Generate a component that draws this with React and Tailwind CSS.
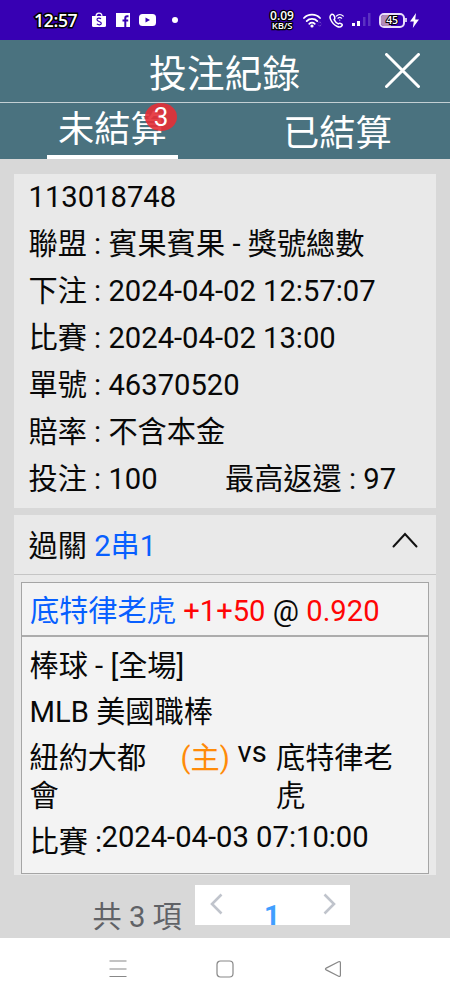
import React from 'react';

const summary = [
  '113018748',
  '聯盟 : 賓果賓果 - 獎號總數',
  '下注 : 2024-04-02 12:57:07',
  '比賽 : 2024-04-02 13:00',
  '單號 : 46370520',
  '賠率 : 不含本金',
];

function StatusBar() {
  return (
    <header className="flex h-10 items-center bg-[#3700b3] pl-[34px] text-white">
      <span className="w-[46px] text-[17.500px] leading-10 font-semibold whitespace-nowrap font-['Open_Sans','Noto_Sans',sans-serif] tracking-[-0.300px] [-webkit-text-stroke:3px_#000] [paint-order:stroke_fill]">12:57</span>
      <svg className="ml-[11px] h-4 w-4" viewBox="0 0 16 16">
        <path d="M1 4h14v9.5a1.500 1.500 0 0 1-1.500 1.500h-11a1.500 1.500 0 0 1-1.500-1.500z" fill="#fff" />
        <path d="M5 4.500C5 0 11 0 11 4.500" fill="none" stroke="#fff" strokeWidth="1.200" />
        <path d="M10 6.800C8.600 5.600 6 6 6 7.700c0 2 4.300 1.500 4.300 3.600 0 1.900-2.900 2-4.500.6" fill="none" stroke="#3700b3" strokeWidth="1.200" />
      </svg>
      <svg className="ml-[9px] h-[14px] w-[14px]" viewBox="0 0 14 14">
        <path d="M0 0h14v14H0z" fill="#fff" />
        <path d="M12.500 3.200H11q-1.700 0-1.700 1.800v9M6.500 7.500h5.700" fill="none" stroke="#3700b3" strokeWidth="2" />
      </svg>
      <svg className="ml-[9px] h-3 w-[17px]" viewBox="0 0 17 12">
        <rect width="17" height="12" rx="3.500" fill="#fff" />
        <path d="M6.500 3.500v5l4.500-2.500z" fill="#3700b3" />
      </svg>
      <span className="ml-4 h-1.5 w-1.5 rounded-full bg-white" />
      <div className="ml-[91px] flex w-[26px] flex-col items-center font-['Open_Sans',sans-serif] font-semibold [-webkit-text-stroke:2.5px_#000] [paint-order:stroke_fill]">
        <span className="text-[12px] leading-[10px]">0.09</span>
        <span className="text-[9.500px] leading-[9px] tracking-[-0.200px]">KB/S</span>
      </div>
      <svg className="ml-2 h-[15px] w-[19px]" viewBox="0 0 19 15" fill="none" stroke="#fff" strokeWidth="1.800" strokeLinecap="round">
        <path d="M1 5c4-4.400 12-4.400 16 0M3.700 8.100c2.600-2.900 8-2.900 10.600 0M6.300 10.800c1.500-1.600 3.900-1.600 5.400 0" />
        <circle cx="9" cy="13" r=".7" fill="#fff" />
        <path d="m15.500 10 1.200-1.200L18 10m-2.500 2 1.200 1.200L18 12" stroke="#7850cc" strokeWidth=".8" />
      </svg>
      <svg className="ml-[7px] h-[15px] w-[15px]" viewBox="0 0 15 15" fill="none" stroke="#fff" strokeWidth="1.500" strokeLinecap="round" strokeLinejoin="round">
        <path d="M2.300 1.500C.8 2.700.7 4.300 1.500 6.200c1.300 3.100 3.600 5.800 6.800 7.300 1.900.9 3.500.7 4.600-.8.600-.8.300-1.500-.4-1.900-1.100-.7-2.300-1-3.200.1-1.700-.8-3.300-2.500-4.200-4.300 1.200-1 .7-2.500.1-3.700-.5-1-1.400-2.100-2.900-1.400z" />
        <path d="M7.300 3.200c2-2 5-2 7 0M9 5.200c1.200-1 2.400-1 3.600 0M10.800 7v.1" strokeWidth="1.200" />
      </svg>
      <svg className="ml-2 h-4 w-[19px]" viewBox="0 0 19 16">
        <path d="M0 11h3v3H0zM5 9h3v5H5z" fill="#fff" />
        <path d="M11 5h2.500v9H11zM16 1h2.500v13H16z" fill="#5b31c2" />
      </svg>
      <div className="relative ml-[8px] flex h-[15px] w-[26px] items-center justify-center overflow-hidden rounded-[5px] border-2 border-[#e9defa]">
        <span className="absolute inset-y-0 left-0 w-[10px] bg-[#b38db8]" />
        <span className="relative font-['Open_Sans',sans-serif] text-[10.500px] leading-[11px] font-semibold tracking-[-0.300px] [-webkit-text-stroke:2px_#000] [paint-order:stroke_fill]">45</span>
      </div>
      <span className="h-1 w-0.5 bg-[#cdbdf0]" />
      <svg className="ml-[3px] h-[15px] w-[9px]" viewBox="0 0 9 15"><path d="M6 0 0 8.500h3.800L2.800 15 9 6.500H5.200z" fill="#fff" /></svg>
    </header>
  );
}

function Header() {
  return (
    <section className="h-[119px] bg-[#4a727f] text-white">
      <div className="flex h-[63px] items-start border-b border-[#c3d0d4]">
        <h1 className="ml-[149px] w-[236px] text-[37.800px] leading-[68px] font-normal">投注紀錄</h1>
        <svg className="mt-[13px] h-[35px] w-[35px]" viewBox="0 0 35 35"><path d="m1.500 1.500 32 32m0-32-32 32" stroke="#fff" strokeWidth="3" strokeLinecap="round" /></svg>
      </div>
      <nav className="flex h-14 text-[36.300px] whitespace-nowrap">
        <div className="relative ml-[47px] h-14 w-[131px] border-b-4 border-white pl-[11px] leading-[54px]">
          未結算
          <span className="absolute top-0 left-[98px] flex h-7 w-8 items-center justify-center rounded-[50%] bg-[#e62f36]/90 text-[26px] leading-7">3</span>
        </div>
        <div className="ml-[105px] leading-[62px]">已結算</div>
      </nav>
    </section>
  );
}

export default function App() {
  return (
    <div className="flex h-[1000px] w-[450px] flex-col overflow-hidden bg-[#d8d8d8] font-[Roboto,'Noto_Sans_CJK_TC',sans-serif] text-[29.200px] text-[#080808]">
      <StatusBar />
      <Header />
      <main className="flex h-[779px] flex-col px-[14px] pt-[15px]">
        <section className="h-[334px] bg-[#e9e9e9] pl-[14.500px] leading-[47.100px] whitespace-nowrap">
          <div className="-mt-[0.500px]">
            {summary.map((line) => <p key={line}>{line}</p>)}
            <p className="flex"><span className="w-[196.500px]">投注 : 100</span><span>最高返還 : 97</span></p>
          </div>
        </section>
        <section className="mt-[7px] h-[360px] bg-[#e9e9e9]">
          <div className="flex h-[60px] items-start border-b border-[#c5c5c5] pl-[14.500px] leading-[63px]">
            <span className="w-[363.500px]">過關 <span className="text-[#075fff]">2串1</span></span>
            <svg className="mt-[17px] h-[16px] w-[26px]" viewBox="0 0 26 16"><path d="M1.500 14.500 13 2l11.500 12.500" fill="none" stroke="#111" strokeWidth="2" strokeLinecap="round" /></svg>
          </div>
          <div className="mt-[7px] ml-[7px] h-[292px] w-[408px] border border-[#a5a5a5] bg-[#f3f3f3] whitespace-nowrap">
            <p className="h-[54px] border-b-2 border-[#acacac] pl-2 leading-[57px]">
              <span className="text-[#075fff]">底特律老虎</span> <span className="text-[#ff0505]">+1+50</span> @ <span className="text-[#ff0505]">0.920</span>
            </p>
            <div className="pt-[6px] pl-[7.500px]">
              <p className="leading-[46px]">棒球 - [全場]</p>
              <p className="leading-[46px]">MLB 美國職棒</p>
              <div className="flex h-[84px] pt-[4px] leading-[38px]">
                <span className="w-[151px]">紐約大都<br />會</span>
                <span className="w-[57px] text-[#ff8b08]">(主)</span>
                <span className="-mt-1.5 w-[38.500px]">vs</span>
                <span>底特律老<br />虎</span>
              </div>
              <p className="flex leading-[46px]"><span className="w-[72px]">比賽 :</span><span className="-mt-[5px]">2024-04-03 07:10:00</span></p>
            </div>
          </div>
        </section>
        <footer className="mt-[10px] ml-[78.500px] flex h-[52px]">
          <span className="w-[102.500px] leading-[64px] text-[#606266]">共 3 項</span>
          <div className="flex h-10 w-[155px] bg-white">
            <svg className="mt-2 ml-[15px] h-[22px] w-[13px]" viewBox="0 0 13 22"><path d="M11.500 1.500 2 11l9.500 9.500" fill="none" stroke="#c0c4cc" strokeWidth="2.600" /></svg>
            <span className="ml-[41px] w-[59px] text-[28px] leading-[62px] font-bold text-[#409eff]">1</span>
            <svg className="mt-2 h-[22px] w-[13px]" viewBox="0 0 13 22"><path d="m1.500 1.500 9.500 9.500-9.500 9.500" fill="none" stroke="#c0c4cc" strokeWidth="2.600" /></svg>
          </div>
        </footer>
      </main>
      <nav className="flex h-[62px] items-start bg-white pt-[22px] pl-[109px]">
        <svg className="h-[18px] w-[18px]" viewBox="0 0 18 18"><path d="M.5 1h17M.5 9h17M.5 16.500h17" stroke="#888" strokeWidth="1.200" /></svg>
        <svg className="ml-[89px] h-[18px] w-[18px]" viewBox="0 0 18 18"><rect x="1" y="1" width="16" height="16" rx="3.500" fill="none" stroke="#888" strokeWidth="1.200" /></svg>
        <svg className="ml-[90px] h-[18px] w-[18px]" viewBox="0 0 18 18"><path d="M14.600 1.800 2.200 8.100q-1.500.9 0 1.800l12.400 6.300q1.800.7 1.800-1V2.800q0-1.700-1.800-1z" fill="none" stroke="#888" strokeWidth="1.200" /></svg>
      </nav>
    </div>
  );
}
